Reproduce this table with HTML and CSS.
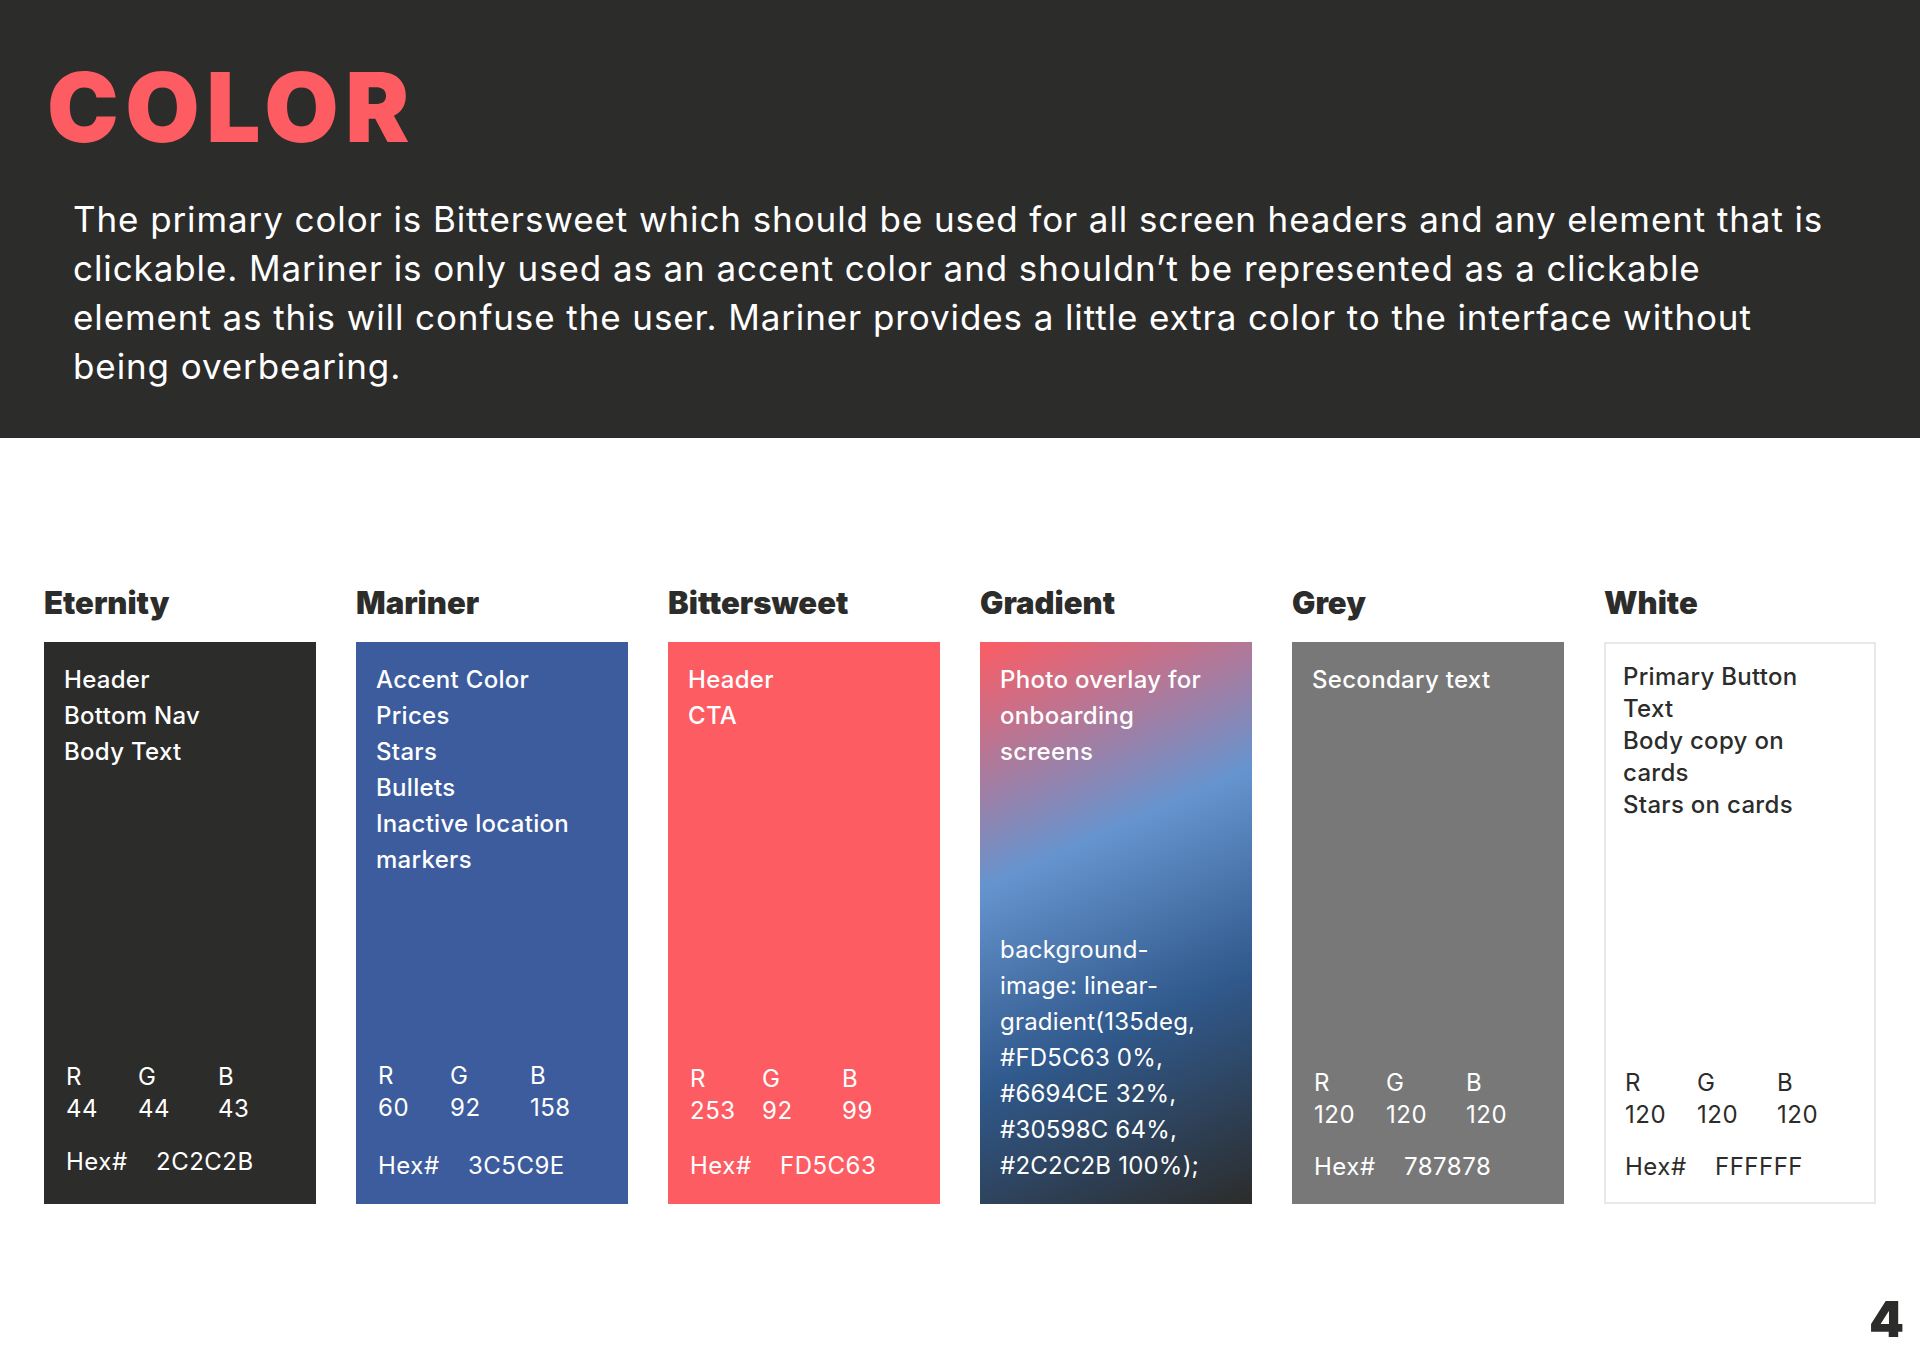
FILE: index.html
```html
<!DOCTYPE html>
<html lang="en">
<head>
<meta charset="utf-8">
<title>Color</title>
<link rel="stylesheet" href="styles.css">
</head>
<body>
<header class="hero">
  <h1 class="hero-title">COLOR</h1>
  <p class="hero-text">The primary color is Bittersweet which should be used for all screen headers and any element that is<br>clickable. Mariner is only used as an accent color and shouldn’t be represented as a clickable<br>element as this will confuse the user. Mariner provides a little extra color to the interface without<br>being overbearing.</p>
</header>

<main class="swatches">
  <section class="swatch">
    <h2 class="swatch-name">Eternity</h2>
    <div class="card card-eternity">
      <ul class="uses">
        <li>Header</li>
        <li>Bottom Nav</li>
        <li>Body Text</li>
      </ul>
      <div class="values">
        <div class="rgb"><span>R</span><span>G</span><span>B</span></div>
        <div class="rgb"><span>44</span><span>44</span><span>43</span></div>
        <div class="hex"><span>Hex#</span><span>2C2C2B</span></div>
      </div>
    </div>
  </section>

  <section class="swatch">
    <h2 class="swatch-name">Mariner</h2>
    <div class="card card-mariner">
      <ul class="uses">
        <li>Accent Color</li>
        <li>Prices</li>
        <li>Stars</li>
        <li>Bullets</li>
        <li>Inactive location<br>markers</li>
      </ul>
      <div class="values">
        <div class="rgb"><span>R</span><span>G</span><span>B</span></div>
        <div class="rgb"><span>60</span><span>92</span><span>158</span></div>
        <div class="hex"><span>Hex#</span><span>3C5C9E</span></div>
      </div>
    </div>
  </section>

  <section class="swatch">
    <h2 class="swatch-name">Bittersweet</h2>
    <div class="card card-bittersweet">
      <ul class="uses">
        <li>Header</li>
        <li>CTA</li>
      </ul>
      <div class="values">
        <div class="rgb"><span>R</span><span>G</span><span>B</span></div>
        <div class="rgb"><span>253</span><span>92</span><span>99</span></div>
        <div class="hex"><span>Hex#</span><span>FD5C63</span></div>
      </div>
    </div>
  </section>

  <section class="swatch">
    <h2 class="swatch-name">Gradient</h2>
    <div class="card card-gradient">
      <ul class="uses">
        <li>Photo overlay for<br>onboarding<br>screens</li>
      </ul>
      <p class="code">background-<br>image: linear-<br>gradient(135deg,<br>#FD5C63 0%,<br>#6694CE 32%,<br>#30598C 64%,<br>#2C2C2B 100%);</p>
    </div>
  </section>

  <section class="swatch">
    <h2 class="swatch-name">Grey</h2>
    <div class="card card-grey">
      <ul class="uses">
        <li>Secondary text</li>
      </ul>
      <div class="values">
        <div class="rgb"><span>R</span><span>G</span><span>B</span></div>
        <div class="rgb"><span>120</span><span>120</span><span>120</span></div>
        <div class="hex"><span>Hex#</span><span>787878</span></div>
      </div>
    </div>
  </section>

  <section class="swatch">
    <h2 class="swatch-name">White</h2>
    <div class="card card-white">
      <ul class="uses uses-tight">
        <li>Primary Button<br>Text</li>
        <li>Body copy on<br>cards</li>
        <li>Stars on cards</li>
      </ul>
      <div class="values">
        <div class="rgb"><span>R</span><span>G</span><span>B</span></div>
        <div class="rgb"><span>120</span><span>120</span><span>120</span></div>
        <div class="hex"><span>Hex#</span><span>FFFFFF</span></div>
      </div>
    </div>
  </section>
</main>

<footer class="page-footer">
  <span class="page-number">4</span>
</footer>
</body>
</html>
```

FILE: styles.css
```css
* {
  box-sizing: border-box;
}

html, body {
  margin: 0;
  padding: 0;
  background: #ffffff;
}

body {
  font-family: "Inter", "Lato", sans-serif;
  color: #2c2c2b;
  width: 1920px;
  height: 1365px;
  overflow: hidden;
}

/* ---------- header band ---------- */
.hero {
  background: #2c2c2b;
  height: 438px;
  padding: 57px 0 0 47px;
}

.hero-title {
  margin: 0;
  font-family: "Inter", sans-serif;
  font-weight: 900;
  font-size: 96px;
  line-height: 100px;
  letter-spacing: 6.5px;
  color: #fd5c63;
}

.hero-text {
  margin: 38px 0 0 26px;
  font-family: "Inter", sans-serif;
  font-weight: 400;
  font-size: 35px;
  line-height: 49px;
  letter-spacing: 0.9px;
  color: #ffffff;
}

/* ---------- swatches ---------- */
.swatches {
  display: grid;
  grid-template-columns: repeat(6, 272px);
  column-gap: 40px;
  padding: 149px 0 0 44px;
}

.swatch {
  display: flex;
  flex-direction: column;
}

.swatch-name {
  margin: 0 0 24px 0;
  font-family: "Inter", sans-serif;
  font-weight: 900;
  font-size: 31px;
  line-height: 31px;
  color: #2c2c2b;
}

.card {
  height: 562px;
  padding: 20px 20px 26px 20px;
  display: flex;
  flex-direction: column;
  justify-content: space-between;
  color: #ffffff;
  font-family: "Inter", sans-serif;
  font-size: 24px;
}

.card-eternity { background: #2c2c2b; }
.card-mariner { background: #3c5c9e; padding-bottom: 22px; }
.card-bittersweet { background: #fd5c63; padding-bottom: 22px; }
.card-grey { background: #787878; padding-bottom: 21px; }
.card-gradient {
  background-image: linear-gradient(156deg, #fd5c63 0%, #6694ce 36%, #30598c 66%, #2c2c2b 100%);
  padding-bottom: 20px;
}
.card-white {
  background: #ffffff;
  border: 2px solid #e8e8e8;
  color: #2c2c2b;
  padding: 17px 18px 19px 17px;
}

.uses {
  list-style: none;
  margin: 0;
  padding: 0;
  font-weight: 500;
  line-height: 36px;
  letter-spacing: 0.3px;
}

.uses-tight {
  line-height: 32px;
}

.code {
  margin: 0;
  font-weight: 400;
  line-height: 36px;
  letter-spacing: 0.2px;
}

.values {
  margin-left: 2px;
  font-weight: 400;
  line-height: 32px;
  letter-spacing: 0.5px;
}

.rgb {
  display: grid;
  grid-template-columns: 72px 80px 60px;
}

.hex {
  display: flex;
  margin-top: 21px;
}

.card-mariner .hex { margin-top: 26px; }
.card-bittersweet .hex { margin-top: 23px; }
.card-grey .hex,
.card-white .hex { margin-top: 20px; }

.hex span:first-child {
  width: 90px;
}

/* ---------- footer ---------- */
.page-footer {
  display: flex;
  justify-content: flex-end;
  padding: 90px 16px 0 0;
}

.page-number {
  font-family: "Inter", sans-serif;
  font-weight: 900;
  font-size: 50px;
  line-height: 51px;
  color: #2c2c2b;
}
```
